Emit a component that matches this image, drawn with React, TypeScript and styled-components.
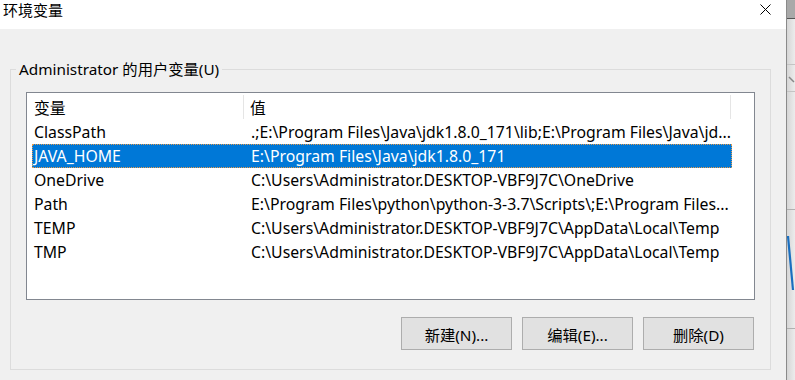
import styled, { createGlobalStyle } from "styled-components";

const GlobalStyle = createGlobalStyle`
  html, body {
    margin: 0;
    padding: 0;
    background: #f0f0f0;
  }
  body {
    font-family: "Noto Sans", "Noto Sans CJK SC", sans-serif;
    font-size: 15px;
    color: #000;
  }
`;

const Screen = styled.div`
  display: flex;
  width: 795px;
  height: 380px;
  overflow: hidden;
`;

const Dialog = styled.div`
  width: 786px;
  display: flex;
  flex-direction: column;
  border-right: 1px solid #8a8a8a;
  background: #f0f0f0;
`;

const TitleBar = styled.div`
  height: 29px;
  background: #fff;
  display: flex;
  align-items: flex-start;
  justify-content: space-between;
`;

const Title = styled.div`
  padding: 0 0 0 3px;
  line-height: 20px;
  font-size: 15px;
`;

const CloseButton = styled.div`
  width: 11px;
  height: 11px;
  margin: 4px 15px 0 0;
  display: flex;
`;

const Body = styled.div`
  flex: 1;
  display: flex;
  flex-direction: column;
`;

const Group = styled.fieldset`
  box-sizing: border-box;
  width: 761px;
  margin: 30px 0 0 10px;
  padding: 0;
  border: 1px solid #dcdcdc;
  min-width: 0;
`;

const Legend = styled.legend`
  margin-left: 5px;
  padding: 0 3px;
  line-height: 20px;
  font-size: 15.3px;
`;

const ListBox = styled.div`
  box-sizing: border-box;
  width: 729px;
  height: 208px;
  margin: 13px 0 0 15px;
  border: 1px solid #828790;
  background: #fff;
  display: flex;
  flex-direction: column;
  font-size: 15.8px;
`;

const Header = styled.div`
  display: grid;
  grid-template-columns: 217px 487px 1fr;
  height: 27px;
`;

const HeaderCell = styled.div<{ $pad: number; $sep?: boolean }>`
  display: flex;
  align-items: center;
  padding-left: ${(p) => p.$pad}px;
  margin: 2px 0 1px;
  border-right: ${(p) => (p.$sep ? "1px solid #e5e5e5" : "none")};
`;

const Row = styled.div<{ $selected?: boolean }>`
  box-sizing: border-box;
  display: grid;
  grid-template-columns: 217px 1fr;
  width: 700px;
  height: 24px;
  margin-left: 5px;
  align-items: center;
  background: ${(p) => (p.$selected ? "#0078d7" : "transparent")};
  color: ${(p) => (p.$selected ? "#fff" : "#000")};
  outline: ${(p) => (p.$selected ? "1px dotted #e59a4c" : "none")};
  outline-offset: -1px;
`;

const Cell = styled.div`
  padding-left: 2px;
  white-space: nowrap;
  overflow: hidden;
`;

const ButtonRow = styled.div`
  display: flex;
  justify-content: flex-end;
  gap: 10px;
  margin: 17px 16px 19px 0;
`;

const Button = styled.div`
  box-sizing: border-box;
  width: 111px;
  height: 33px;
  border: 1px solid #adadad;
  background: #e1e1e1;
  display: flex;
  align-items: center;
  justify-content: center;
  font-size: 15.3px;
`;

const BackWindow = styled.div`
  width: 8px;
  height: 380px;
  background: linear-gradient(to right, #d6d6d6, #ececec);
`;

const rows = [
  {
    name: "ClassPath",
    value: ".;E:\\Program Files\\Java\\jdk1.8.0_171\\lib;E:\\Program Files\\Java\\jd...",
  },
  { name: "JAVA_HOME", value: "E:\\Program Files\\Java\\jdk1.8.0_171", selected: true },
  { name: "OneDrive", value: "C:\\Users\\Administrator.DESKTOP-VBF9J7C\\OneDrive" },
  {
    name: "Path",
    value: "E:\\Program Files\\python\\python-3-3.7\\Scripts\\;E:\\Program Files...",
  },
  { name: "TEMP", value: "C:\\Users\\Administrator.DESKTOP-VBF9J7C\\AppData\\Local\\Temp" },
  { name: "TMP", value: "C:\\Users\\Administrator.DESKTOP-VBF9J7C\\AppData\\Local\\Temp" },
];

const App = () => {
  return (
    <>
      <GlobalStyle />
      <Screen>
        <Dialog>
          <TitleBar>
            <Title>环境变量</Title>
            <CloseButton>
              <svg width="11" height="11" viewBox="0 0 11 11">
                <path d="M0.5 0.5 L10.5 10.5 M10.5 0.5 L0.5 10.5" stroke="#000" strokeWidth="1" />
              </svg>
            </CloseButton>
          </TitleBar>
          <Body>
            <Group>
              <Legend>Administrator 的用户变量(U)</Legend>
              <ListBox>
                <Header>
                  <HeaderCell $pad={7} $sep>
                    变量
                  </HeaderCell>
                  <HeaderCell $pad={6} $sep>
                    值
                  </HeaderCell>
                  <HeaderCell $pad={0} />
                </Header>
                {rows.map((r) => (
                  <Row key={r.name} $selected={r.selected}>
                    <Cell>{r.name}</Cell>
                    <Cell>{r.value}</Cell>
                  </Row>
                ))}
              </ListBox>
              <ButtonRow>
                <Button>新建(N)...</Button>
                <Button>编辑(E)...</Button>
                <Button>删除(D)</Button>
              </ButtonRow>
            </Group>
          </Body>
        </Dialog>
        <BackWindow>
          <svg width="8" height="380" viewBox="0 0 8 380">
            <rect x="0" y="0" width="8" height="18" fill="#a9a9a9" />
            <line x1="0" y1="18.5" x2="8" y2="18.5" stroke="#555" />
            <line x1="0" y1="64.5" x2="8" y2="64.5" stroke="#c4c4c4" />
            <line x1="2" y1="77" x2="7" y2="82" stroke="#888" strokeWidth="1.5" />
            <line x1="0" y1="91.5" x2="8" y2="91.5" stroke="#c4c4c4" />
            <line x1="0" y1="209.5" x2="8" y2="209.5" stroke="#b0b0b0" />
            <path d="M1 236 L6 290" stroke="#1a6fc0" strokeWidth="2.2" fill="none" />
            <line x1="0" y1="328.5" x2="8" y2="328.5" stroke="#b0b0b0" />
          </svg>
        </BackWindow>
      </Screen>
    </>
  );
};

export default App;
